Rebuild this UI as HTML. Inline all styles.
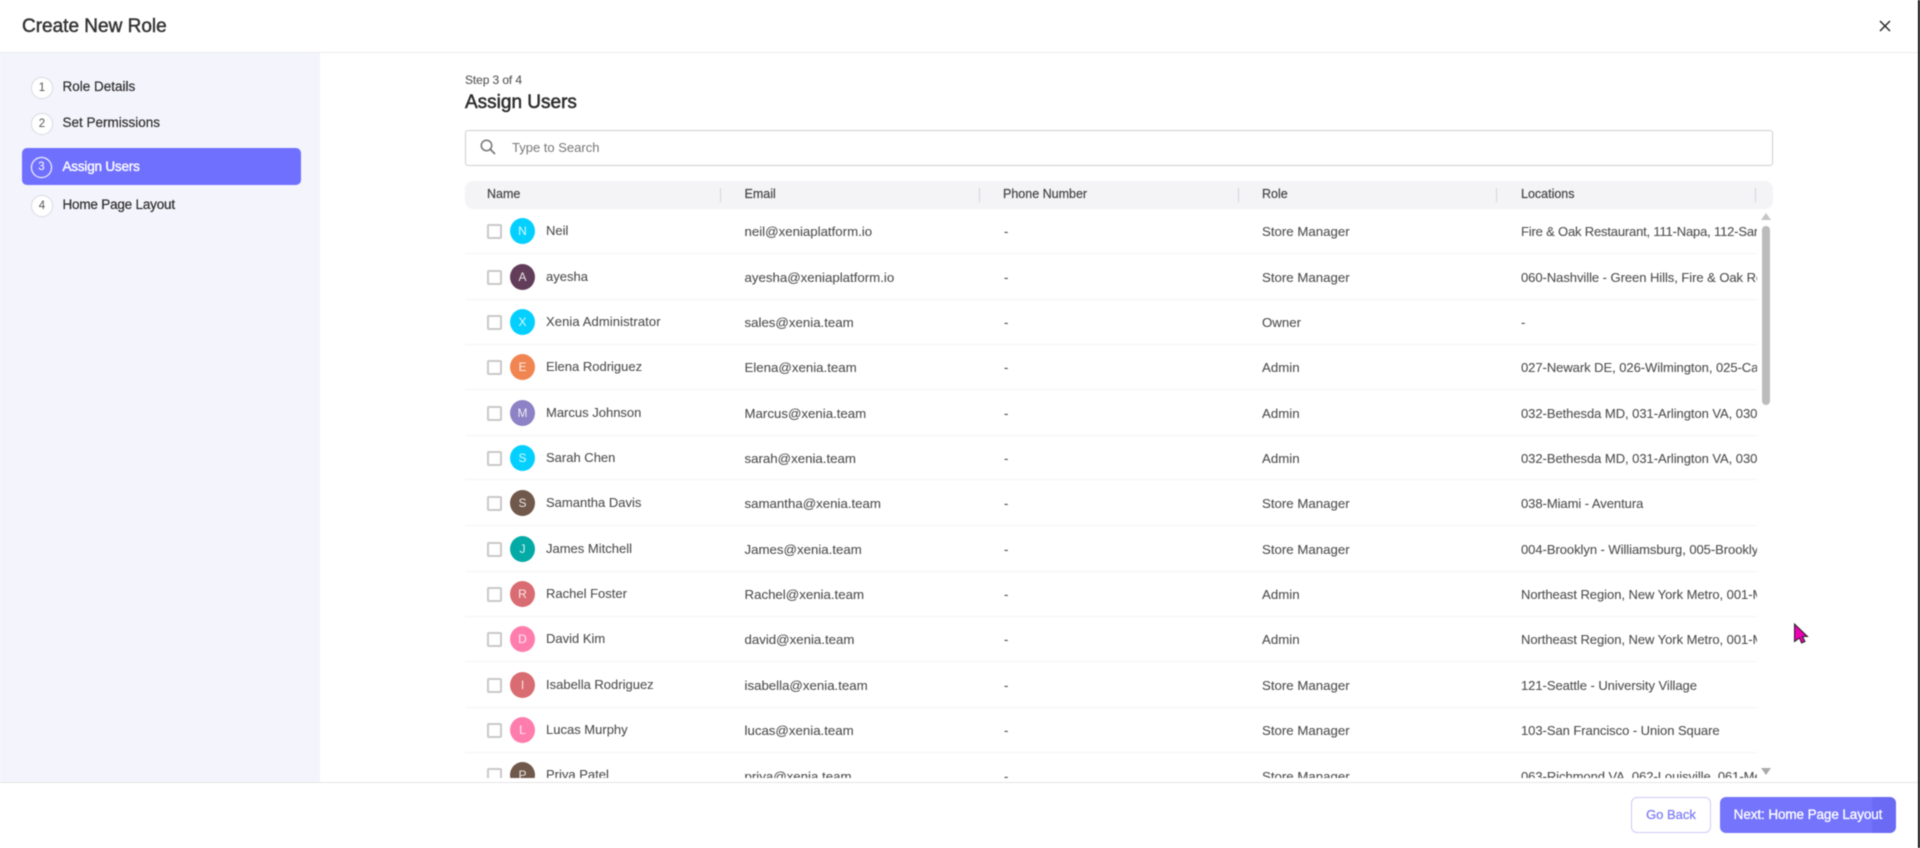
<!DOCTYPE html>
<html lang="en">
<head>
<meta charset="utf-8">
<title>Create New Role</title>
<style>
html,body{margin:0;padding:0;width:1920px;height:848px;overflow:hidden;background:#fff}
body{font-family:"Liberation Sans",sans-serif;color:#3d3d3f;position:relative}
#app{position:absolute;left:0;top:0;width:1920px;height:848px;filter:blur(.55px);background:#fff;overflow:hidden}
.a{position:absolute;white-space:nowrap}
.side{position:absolute;left:0;top:53px;width:320px;height:729px;background:#f4f4fd}
.num{position:absolute;left:31px;width:20px;height:20px;border:1px solid #dedee8;border-radius:50%;background:#fff;font-size:11.5px;line-height:20px;text-align:center;color:#555;box-shadow:0 0 1px #ddd}
.lab{position:absolute;left:62.5px;font-size:13.5px;line-height:18px;color:#333;font-weight:400;-webkit-text-stroke:.25px #333}
.th{position:absolute;top:186px;font-size:12.5px;line-height:16px;color:#444;-webkit-text-stroke:.2px #444}
.dv{position:absolute;top:188px;width:1px;height:14px;background:#d3d3da}
.rows{position:absolute;left:465px;top:209px;width:1292px;height:569px;overflow:hidden}
.rl{position:absolute;left:0;width:1292px;height:1px;background:#f4f4f5}
.cb{position:absolute;left:22px;width:11px;height:11px;border:2px solid #c9c9c9;border-radius:2px;background:#fff}
.av{position:absolute;left:45px;width:25px;height:26px;border-radius:50%;color:#fff;opacity:.98;text-align:center;font-size:12px;line-height:26px}
.av b{font-weight:400;color:rgba(255,255,255,.85)}
.t{position:absolute;font-size:13px;line-height:16px;color:#505052;white-space:nowrap;-webkit-text-stroke:.1px #505052}
.e,.r{font-size:13.25px}
.loc{width:236px;overflow:hidden;letter-spacing:-.05px}
</style>
</head>
<body>
<div id="app">
<div class="a" style="left:22px;top:15px;font-size:19px;line-height:24px;color:#333;-webkit-text-stroke:.45px #333">Create New Role</div>
<div class="a" style="left:0;top:52px;width:1918px;height:1px;background:#ececee"></div>
<svg class="a" style="left:1879px;top:20px" width="12" height="12" viewBox="0 0 12 12"><path d="M1 1L11 11M11 1L1 11" stroke="#2a2a2a" stroke-width="1.5" fill="none"/></svg>

<div class="side"></div>
<div class="num" style="top:77px">1</div><div class="lab" style="top:78px">Role Details</div>
<div class="num" style="top:113px">2</div><div class="lab" style="top:114px">Set Permissions</div>
<div class="a" style="left:22px;top:148px;width:279px;height:37px;background:#7070ff;border-radius:5px"></div>
<div class="num" style="top:157px;background:transparent;border:1.5px solid #fff;width:19px;height:19px;line-height:19px;color:#fff">3</div><div class="lab" style="top:158px;color:#fff;-webkit-text-stroke:.35px #fff;letter-spacing:-.2px">Assign Users</div>
<div class="num" style="top:195px">4</div><div class="lab" style="top:196px;letter-spacing:-.2px">Home Page Layout</div>

<div class="a" style="left:465px;top:72px;font-size:12px;line-height:16px;color:#555;letter-spacing:-.1px;-webkit-text-stroke:.1px #555">Step 3 of 4</div>
<div class="a" style="left:465px;top:91px;font-size:19px;line-height:24px;color:#2b2b2d;-webkit-text-stroke:.5px #2b2b2d">Assign Users</div>

<div class="a" style="left:465px;top:130px;width:1306px;height:34px;border:1px solid #cfcfd2;border-radius:3px;background:#fff"></div>
<svg class="a" style="left:479px;top:138px" width="18" height="18" viewBox="0 0 18 18"><circle cx="7.5" cy="7.5" r="5.2" fill="none" stroke="#777" stroke-width="1.5"/><path d="M11.5 11.5L16 16" stroke="#777" stroke-width="1.7" fill="none"/></svg>
<div class="a" style="left:512px;top:140px;font-size:13px;line-height:16px;color:#777">Type to Search</div>

<div class="a" style="left:465px;top:181px;width:1308px;height:28px;background:#f4f4f6;border-radius:8px"></div>
<div class="th" style="left:487px">Name</div><div class="dv" style="left:720px"></div>
<div class="th" style="left:744.5px">Email</div><div class="dv" style="left:979px"></div>
<div class="th" style="left:1003px">Phone Number</div><div class="dv" style="left:1238px"></div>
<div class="th" style="left:1262px">Role</div><div class="dv" style="left:1496px"></div>
<div class="th" style="left:1521px">Locations</div><div class="dv" style="left:1755px"></div>

<div class="rows">
<div class="rl" style="top:44px"></div><div class="rl" style="top:90px"></div><div class="rl" style="top:135px"></div><div class="rl" style="top:180px"></div><div class="rl" style="top:226px"></div><div class="rl" style="top:270px"></div><div class="rl" style="top:316px"></div><div class="rl" style="top:362px"></div><div class="rl" style="top:407px"></div><div class="rl" style="top:452px"></div><div class="rl" style="top:498px"></div><div class="rl" style="top:543px"></div>

<div class="cb" style="top:15px"></div><div class="av" style="top:9px;background:#00d0ff"><b>N</b></div><div class="t" style="left:81px;top:14px">Neil</div><div class="t e" style="left:279.5px;top:15px">neil@xeniaplatform.io</div><div class="t" style="left:539px;top:15px">-</div><div class="t r" style="left:797px;top:15px">Store Manager</div><div class="t loc" style="left:1056px;top:15px;letter-spacing:-.18px">Fire &amp; Oak Restaurant, 111-Napa, 112-San Francisco</div>

<div class="cb" style="top:61px"></div><div class="av" style="top:55px;background:#5f3a57"><b>A</b></div><div class="t" style="left:81px;top:60px">ayesha</div><div class="t e" style="left:279.5px;top:61px">ayesha@xeniaplatform.io</div><div class="t" style="left:539px;top:61px">-</div><div class="t r" style="left:797px;top:61px">Store Manager</div><div class="t loc" style="left:1056px;top:61px">060-Nashville - Green Hills, Fire &amp; Oak Restaurant</div>

<div class="cb" style="top:106px"></div><div class="av" style="top:100px;background:#00d0ff"><b>X</b></div><div class="t" style="left:81px;top:104.5px;letter-spacing:.1px">Xenia Administrator</div><div class="t e" style="left:279.5px;top:106px">sales@xenia.team</div><div class="t" style="left:539px;top:106px">-</div><div class="t r" style="left:797px;top:106px">Owner</div><div class="t loc" style="left:1056px;top:106px">-</div>

<div class="cb" style="top:151px"></div><div class="av" style="top:145px;background:#f0834f"><b>E</b></div><div class="t" style="left:81px;top:150px">Elena Rodriguez</div><div class="t e" style="left:279.5px;top:151px">Elena@xenia.team</div><div class="t" style="left:539px;top:151px">-</div><div class="t r" style="left:797px;top:151px">Admin</div><div class="t loc" style="left:1056px;top:151px">027-Newark DE, 026-Wilmington, 025-Camden NJ</div>

<div class="cb" style="top:197px"></div><div class="av" style="top:191px;background:#8a80c4"><b>M</b></div><div class="t" style="left:81px;top:196px">Marcus Johnson</div><div class="t e" style="left:279.5px;top:197px">Marcus@xenia.team</div><div class="t" style="left:539px;top:197px">-</div><div class="t r" style="left:797px;top:197px">Admin</div><div class="t loc" style="left:1056px;top:197px">032-Bethesda MD, 031-Arlington VA, 030-Alexandria</div>

<div class="cb" style="top:242px"></div><div class="av" style="top:236px;background:#00d0ff"><b>S</b></div><div class="t" style="left:81px;top:241px">Sarah Chen</div><div class="t e" style="left:279.5px;top:242px">sarah@xenia.team</div><div class="t" style="left:539px;top:242px">-</div><div class="t r" style="left:797px;top:242px">Admin</div><div class="t loc" style="left:1056px;top:242px">032-Bethesda MD, 031-Arlington VA, 030-Alexandria</div>

<div class="cb" style="top:287px"></div><div class="av" style="top:281px;background:#6e5548"><b>S</b></div><div class="t" style="left:81px;top:286px">Samantha Davis</div><div class="t e" style="left:279.5px;top:287px">samantha@xenia.team</div><div class="t" style="left:539px;top:287px">-</div><div class="t r" style="left:797px;top:287px">Store Manager</div><div class="t loc" style="left:1056px;top:287px">038-Miami - Aventura</div>

<div class="cb" style="top:333px"></div><div class="av" style="top:327px;background:#00a9a5"><b>J</b></div><div class="t" style="left:81px;top:332px">James Mitchell</div><div class="t e" style="left:279.5px;top:333px">James@xenia.team</div><div class="t" style="left:539px;top:333px">-</div><div class="t r" style="left:797px;top:333px">Store Manager</div><div class="t loc" style="left:1056px;top:333px">004-Brooklyn - Williamsburg, 005-Brooklyn Heights</div>

<div class="cb" style="top:378px"></div><div class="av" style="top:372px;background:#d96a70"><b>R</b></div><div class="t" style="left:81px;top:377px">Rachel Foster</div><div class="t e" style="left:279.5px;top:378px">Rachel@xenia.team</div><div class="t" style="left:539px;top:378px">-</div><div class="t r" style="left:797px;top:378px">Admin</div><div class="t loc" style="left:1056px;top:378px">Northeast Region, New York Metro, 001-Manhattan</div>

<div class="cb" style="top:423px"></div><div class="av" style="top:417px;background:#ff7bab"><b>D</b></div><div class="t" style="left:81px;top:422px">David Kim</div><div class="t e" style="left:279.5px;top:423px">david@xenia.team</div><div class="t" style="left:539px;top:423px">-</div><div class="t r" style="left:797px;top:423px">Admin</div><div class="t loc" style="left:1056px;top:423px">Northeast Region, New York Metro, 001-Manhattan</div>

<div class="cb" style="top:469px"></div><div class="av" style="top:463px;background:#d96a70"><b>I</b></div><div class="t" style="left:81px;top:468px">Isabella Rodriguez</div><div class="t e" style="left:279.5px;top:469px">isabella@xenia.team</div><div class="t" style="left:539px;top:469px">-</div><div class="t r" style="left:797px;top:469px">Store Manager</div><div class="t loc" style="left:1056px;top:469px">121-Seattle - University Village</div>

<div class="cb" style="top:514px"></div><div class="av" style="top:508px;background:#ff7bab"><b>L</b></div><div class="t" style="left:81px;top:513px">Lucas Murphy</div><div class="t e" style="left:279.5px;top:514px">lucas@xenia.team</div><div class="t" style="left:539px;top:514px">-</div><div class="t r" style="left:797px;top:514px">Store Manager</div><div class="t loc" style="left:1056px;top:514px">103-San Francisco - Union Square</div>

<div class="cb" style="top:559px"></div><div class="av" style="top:553px;background:#6e5548"><b>P</b></div><div class="t" style="left:81px;top:558px">Priya Patel</div><div class="t e" style="left:279.5px;top:560px">priya@xenia.team</div><div class="t" style="left:539px;top:560px">-</div><div class="t r" style="left:797px;top:560px">Store Manager</div><div class="t loc" style="left:1056px;top:560px">063-Richmond VA, 062-Louisville, 061-Memphis</div>
</div>

<svg class="a" style="left:1760px;top:212px" width="12" height="9" viewBox="0 0 12 9"><path d="M6 1L11 8H1Z" fill="#c6c6c6"/></svg>
<div class="a" style="left:1762px;top:226px;width:7.5px;height:179px;background:#bcbcbc;border-radius:4px"></div>
<svg class="a" style="left:1760px;top:767px" width="12" height="9" viewBox="0 0 12 9"><path d="M1 1H11L6 8Z" fill="#aaa"/></svg>

<div class="a" style="left:0;top:782px;width:1918px;height:1px;background:#e4e4e6"></div>
<div class="a" style="left:320px;top:778px;width:1598px;height:4px;background:#fff"></div>

<div class="a" style="left:1631px;top:797px;width:78px;height:34px;border:1px solid #cfcaf7;border-radius:6px;background:#fff;text-align:center;font-size:13px;line-height:34px;color:#7c7cf5;-webkit-text-stroke:.25px #7c7cf5">Go Back</div>
<div class="a" style="left:1720px;top:797px;width:176px;height:36px;border-radius:6px;background:linear-gradient(90deg,#7474fd 0,#7474fd 86%,#6a6af5 87%,#6a6af5 100%);text-align:center;font-size:13.5px;line-height:36px;color:#fff;letter-spacing:-.1px;-webkit-text-stroke:.3px #fff">Next: Home Page Layout</div>

<svg class="a" style="left:1793px;top:623px" width="16" height="21" viewBox="0 0 16 21"><path d="M1.5 1L14.5 13.5H9.5L12 18.5L8.5 20L6.5 15L1.5 18.5Z" fill="#ec00b4" stroke="#222" stroke-width="1"/></svg>

<div class="a" style="left:1918px;top:0;width:2px;height:848px;background:#0a0a0a"></div>
</div>
</body>
</html>
